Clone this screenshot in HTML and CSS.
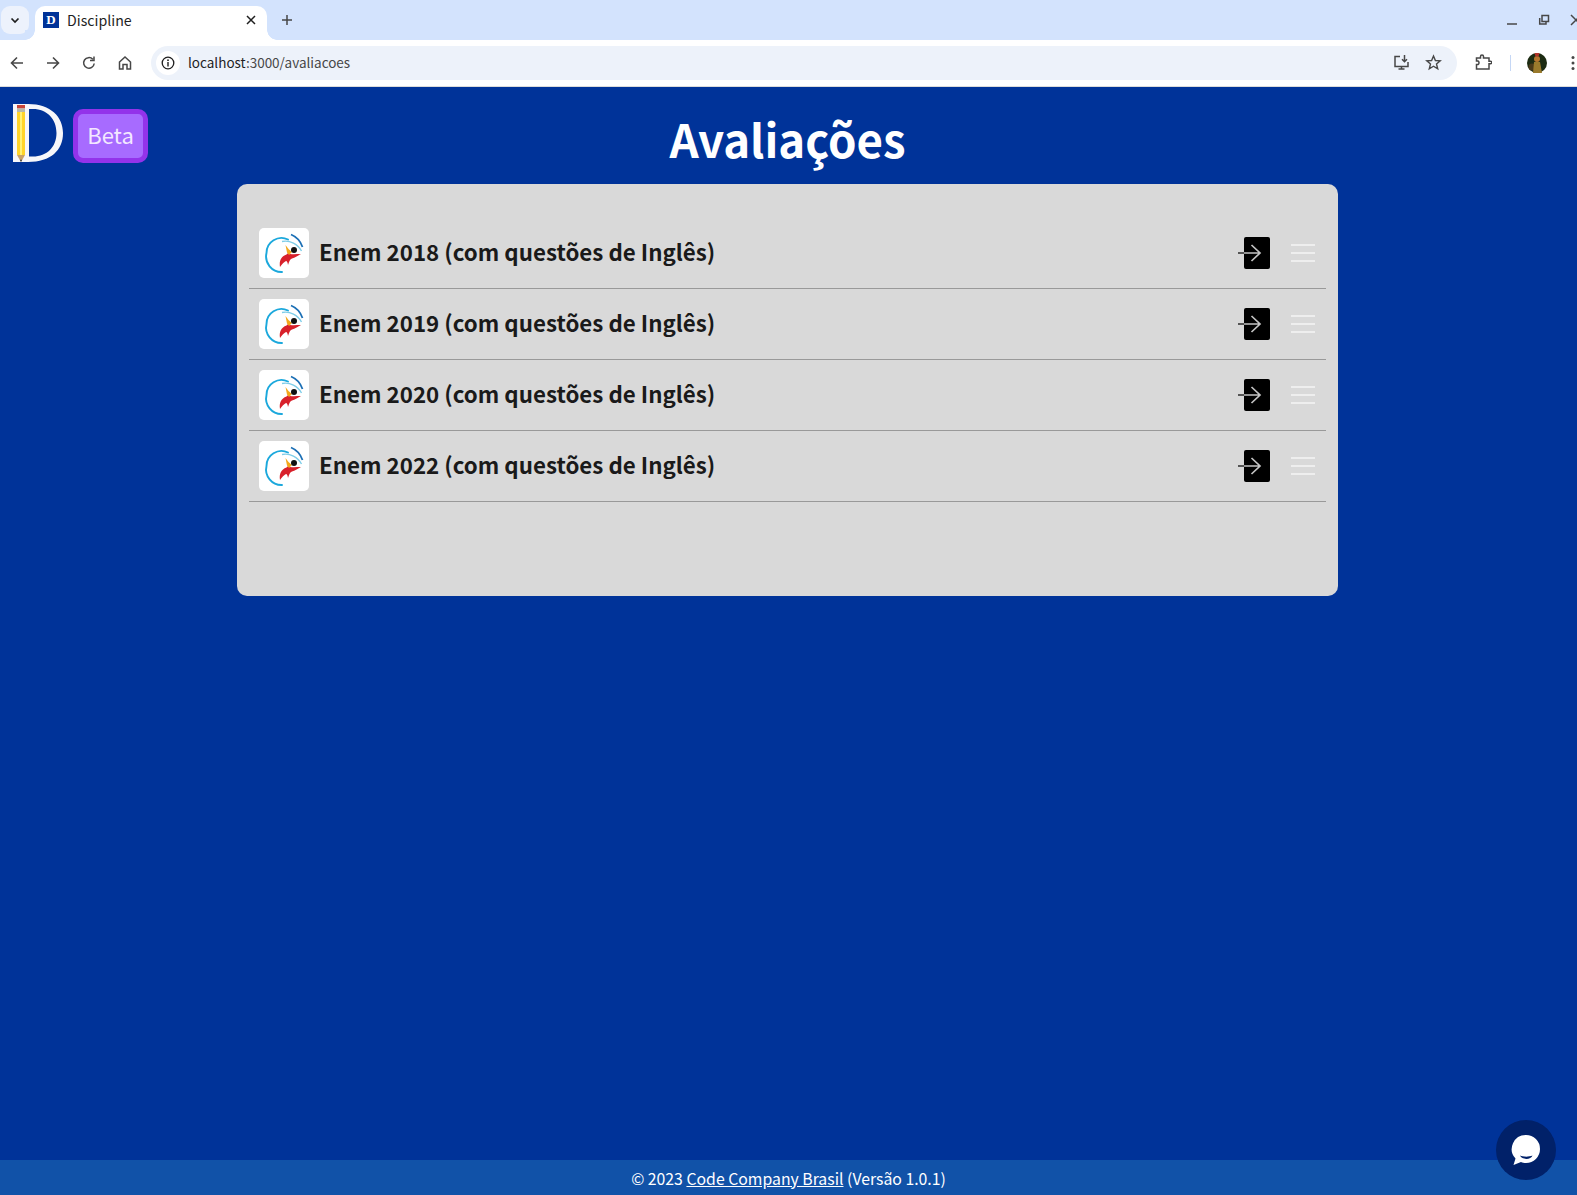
FILE: index.html
```html
<!DOCTYPE html>
<html lang="pt-BR">
<head>
<meta charset="utf-8">
<title>Discipline</title>
<link rel="stylesheet" href="styles.css">
</head>
<body>
<svg class="defs" width="0" height="0" aria-hidden="true">
  <symbol id="enem" viewBox="0 0 50 50">
    <path d="M29 11.500A15 15 0 0 0 7.500 25A15.500 15.500 0 0 0 23 44" fill="none" stroke="#1ba8dc" stroke-width="1.900" stroke-linecap="round"/>
    <path d="M32 6.500C38 9 41.500 13 43.500 19" fill="none" stroke="#1b6fb5" stroke-width="1.800"/>
    <path d="M23 13.500C31 12 39 16 42.500 23" fill="none" stroke="#7fcde8" stroke-width="1.400"/>
    <path d="M21 39C20 33 22 28.500 27.500 26.500L30 24L31 26C35 26.500 38 26 42 26C38 28 36 29.500 33 30.500C31 31 30 34 29 37C28.500 34 28 33 27 33C25 34 23 36 21 39Z" fill="#d8202a"/>
    <path d="M26.500 17L29.500 21L33 24L30 27L28 24.500Z" fill="#f3a81c"/>
    <circle cx="35" cy="22" r="3" fill="#111"/>
  </symbol>
  <symbol id="enter" viewBox="0 0 33 32">
    <rect x="6" y="0" width="26" height="32" rx="2" fill="#000"/>
    <path d="M0 16H6" stroke="#555" stroke-width="2" fill="none"/>
    <path d="M6 16H22M13.500 8L22 16L13.500 24" stroke="#c4c4c4" stroke-width="1.700" fill="none"/>
  </symbol>
</svg>

<div class="browser">
  <div class="tabstrip">
    <div class="tabsearch">
      <svg width="12" height="12" viewBox="0 0 12 12"><path d="M2.500 4.500L6 8L9.500 4.500" fill="none" stroke="#1f1f1f" stroke-width="1.700"/></svg>
    </div>
    <div class="tab">
      <span class="favicon">D</span>
      <span class="tabtitle">Discipline</span>
      <svg class="tabclose" width="12" height="12" viewBox="0 0 12 12"><path d="M2 2L10 10M10 2L2 10" stroke="#1f1f1f" stroke-width="1.500"/></svg>
    </div>
    <svg class="newtab" width="12" height="12" viewBox="0 0 12 12"><path d="M6 1V11M1 6H11" stroke="#474747" stroke-width="1.500"/></svg>
    <div class="winctl">
      <svg width="12" height="12" viewBox="0 0 12 12"><path d="M1 10H11" stroke="#474747" stroke-width="1.500"/></svg>
      <svg width="12" height="12" viewBox="0 0 12 12"><path d="M1.700 4V10H8V7.500M4 1.500H10.500V7.500H4Z" fill="none" stroke="#474747" stroke-width="1.500"/></svg>
      <svg width="12" height="12" viewBox="0 0 12 12"><path d="M1 1L11 11M11 1L1 11" stroke="#474747" stroke-width="1.500"/></svg>
    </div>
  </div>
  <div class="toolbar">
    <div class="navbtns">
      <svg width="16" height="16" viewBox="0 0 16 16"><path d="M14 8H2.500M8 2.500L2.500 8L8 13.500" fill="none" stroke="#474747" stroke-width="1.600"/></svg>
      <svg width="16" height="16" viewBox="0 0 16 16"><path d="M2 8H13.500M8 2.500L13.500 8L8 13.500" fill="none" stroke="#474747" stroke-width="1.600"/></svg>
      <svg width="16" height="16" viewBox="0 0 16 16"><path d="M13.200 8.500A5.300 5.300 0 1 1 11.800 4.300M13 1.500V5.500H9" fill="none" stroke="#474747" stroke-width="1.500"/></svg>
      <svg width="16" height="16" viewBox="0 0 16 16"><path d="M2.500 7L8 2L13.500 7V14H10V9.500H6V14H2.500Z" fill="none" stroke="#474747" stroke-width="1.500"/></svg>
    </div>
    <div class="omnibox">
      <span class="siteinfo">
        <svg width="14" height="14" viewBox="0 0 14 14"><circle cx="7" cy="7" r="5.800" fill="none" stroke="#1f1f1f" stroke-width="1.300"/><path d="M7 6V10.500" stroke="#1f1f1f" stroke-width="1.400"/><circle cx="7" cy="4.200" r=".9" fill="#1f1f1f"/></svg>
      </span>
      <span class="url">localhost<span class="urlpath">:3000/avaliacoes</span></span>
      <span class="omniicons">
        <svg width="17" height="17" viewBox="0 0 17 17"><path d="M7 2.500H2V12.500H15V8M5.500 15H11.500M8.500 12.500V15M11.500 1V7.500M9 5.200L11.500 7.700L14 5.200" fill="none" stroke="#474747" stroke-width="1.500"/></svg>
        <svg width="17" height="17" viewBox="0 0 17 17"><path d="M8.500 2L10.400 6.500L15.200 6.900L11.500 10L12.700 14.800L8.500 12.200L4.300 14.800L5.500 10L1.800 6.900L6.600 6.500Z" fill="none" stroke="#474747" stroke-width="1.400"/></svg>
      </span>
    </div>
    <svg class="ext" width="17" height="17" viewBox="0 0 17 17"><path d="M1.500 4H5.500V2.500A1.500 1.500 0 0 1 8.500 2.500V4H14V7.200H15.500A1.300 1.300 0 0 1 15.500 9.800H14V15H1.500V10.500H3A2 2 0 0 0 3 7H1.500Z" fill="none" stroke="#474747" stroke-width="1.500"/></svg>
    <span class="tooldiv"></span>
    <svg class="avatar" width="20" height="20" viewBox="0 0 20 20">
      <circle cx="10" cy="10" r="10" fill="#1c2b12"/>
      <circle cx="5" cy="14" r="3.500" fill="#4a3a1a"/>
      <path d="M7 9H13L15 20H6Z" fill="#9a7a2c"/>
      <circle cx="10" cy="6" r="3" fill="#b5762f"/>
      <path d="M7.500 0H12.500L11.500 3.500H8.500Z" fill="#b0342a"/>
    </svg>
    <svg class="dots" width="4" height="16" viewBox="0 0 4 16"><circle cx="2" cy="2.500" r="1.500" fill="#474747"/><circle cx="2" cy="8" r="1.500" fill="#474747"/><circle cx="2" cy="13.500" r="1.500" fill="#474747"/></svg>
  </div>
</div>

<div class="page">
  <header class="header">
    <div class="brand">
      <svg class="logo" width="50" height="58" viewBox="0 0 50 58">
        <path fill-rule="evenodd" d="M0 0H15C38 0 50 13 50 29C50 46 38 58 15 58H0ZM16 5V52.500H20C34 52.500 43.500 43 43.500 29C43.500 15 34 5 20 5Z" fill="#f7f7fa"/>
        <rect x="4" y="1" width="8" height="3.500" fill="#c8453a"/>
        <rect x="4" y="4.500" width="8" height="3.500" fill="#b9b9a8"/>
        <rect x="4" y="8" width="8" height="43" fill="#ffd42a"/>
        <rect x="7" y="8" width="2" height="43" fill="#fff176"/>
        <path d="M4 51H12L8 58Z" fill="#c9a268"/>
        <path d="M6.700 55.700H9.300L8 58Z" fill="#444"/>
      </svg>
      <span class="beta">Beta</span>
    </div>
    <h1 class="title">Avaliações</h1>
    <div class="header-end"></div>
  </header>

  <main class="card">
    <ul class="list">
      <li class="row">
        <span class="thumb"><svg width="50" height="50"><use href="#enem"/></svg></span>
        <span class="name">Enem 2018 (com questões de Inglês)</span>
        <svg class="enter" width="33" height="32"><use href="#enter"/></svg>
        <span class="burger"><i></i><i></i><i></i></span>
      </li>
      <li class="row">
        <span class="thumb"><svg width="50" height="50"><use href="#enem"/></svg></span>
        <span class="name">Enem 2019 (com questões de Inglês)</span>
        <svg class="enter" width="33" height="32"><use href="#enter"/></svg>
        <span class="burger"><i></i><i></i><i></i></span>
      </li>
      <li class="row">
        <span class="thumb"><svg width="50" height="50"><use href="#enem"/></svg></span>
        <span class="name">Enem 2020 (com questões de Inglês)</span>
        <svg class="enter" width="33" height="32"><use href="#enter"/></svg>
        <span class="burger"><i></i><i></i><i></i></span>
      </li>
      <li class="row">
        <span class="thumb"><svg width="50" height="50"><use href="#enem"/></svg></span>
        <span class="name">Enem 2022 (com questões de Inglês)</span>
        <svg class="enter" width="33" height="32"><use href="#enter"/></svg>
        <span class="burger"><i></i><i></i><i></i></span>
      </li>
    </ul>
  </main>

  <footer class="footer">© 2023 <a class="footlink" href="#">Code Company Brasil</a> (Versão 1.0.1)</footer>

  <button class="chat" aria-label="Chat">
    <svg width="32" height="34" viewBox="0 0 32 34"><path d="M16 2A14 14 0 0 1 16 30C14 30 12.500 29.700 11 29L3.500 32L5.500 25.500A14 14 0 0 1 16 2Z" fill="#fff"/><path d="M10 22.500C13 24 19 24 22.500 22.500C21 27 12 27 10 22.500Z" fill="#012169"/></svg>
  </button>
</div>
</body>
</html>
```

FILE: styles.css
```css
* { box-sizing: border-box; }
html, body { margin: 0; height: 100%; overflow: hidden; }
body {
  display: flex;
  flex-direction: column;
  height: 1195px;
  font-family: "Noto Sans CJK JP", "Noto Sans", sans-serif;
}
.defs { position: absolute; }

.browser { flex: none; }
.tabstrip {
  height: 40px;
  background: #d3e3fd;
  display: flex;
  align-items: flex-start;
  padding-left: 1px;
  overflow: hidden;
}
.tabsearch {
  width: 28px;
  height: 28px;
  margin-top: 6px;
  border-radius: 9px;
  background: #edf2fc;
  display: flex;
  align-items: center;
  justify-content: center;
}
.tab {
  width: 232px;
  height: 34px;
  margin: 6px 0 0 6px;
  padding: 0 10px 6px 8px;
  background: #fff;
  border-radius: 10px 10px 0 0;
  display: flex;
  align-items: center;
  position: relative;
}
.tab::before,
.tab::after {
  content: "";
  position: absolute;
  bottom: 0;
  width: 10px;
  height: 10px;
}
.tab::before {
  left: -10px;
  background: radial-gradient(circle at 0 0, #d3e3fd 9.500px, #fff 10px);
}
.tab::after {
  right: -10px;
  background: radial-gradient(circle at 100% 0, #d3e3fd 9.500px, #fff 10px);
}
.favicon {
  width: 16px;
  height: 16px;
  background: #003399;
  color: #fff;
  font: bold 13px/16px "Liberation Serif", serif;
  text-align: center;
}
.tabtitle { margin-left: 8px; font-size: 14.200px; line-height: 20px; color: #1f1f1f; flex: 1; }
.tabclose { margin-right: 0; }
.newtab { margin: 14px 0 0 14px; }
.winctl {
  margin-left: auto;
  margin-right: -5px;
  padding-top: 14px;
  display: flex;
  gap: 20px;
}
.toolbar {
  height: 47px;
  background: #fff;
  border-bottom: 1px solid #dcdcdc;
  display: flex;
  align-items: center;
  padding: 0 0 1px 9px;
}
.navbtns { display: flex; gap: 20px; }
.omnibox {
  width: 1306px;
  height: 34px;
  margin-left: 18px;
  border-radius: 17px;
  background: #edf2fa;
  display: flex;
  align-items: center;
  padding: 0 15px 0 5px;
}
.siteinfo {
  width: 24px;
  height: 24px;
  border-radius: 50%;
  background: #fff;
  display: flex;
  align-items: center;
  justify-content: center;
}
.url { margin: 0 0 2px 8px; font-size: 13.500px; line-height: 20px; color: #1f1f1f; flex: 1; }
.urlpath { color: #474747; }
.omniicons { display: flex; gap: 15px; }
.ext { margin-left: 18px; }
.tooldiv { width: 1px; height: 16px; margin-left: 18px; background: #c5d7f5; }
.avatar { margin-left: 16px; flex: none; }
.dots { margin-left: 24px; flex: none; }

.page {
  flex: 1;
  position: relative;
  background: #003399;
  display: flex;
  flex-direction: column;
}
.header {
  height: 97px;
  padding-right: 2px;
  display: grid;
  grid-template-columns: 1fr auto 1fr;
  align-items: start;
}
.brand {
  display: flex;
  align-items: flex-start;
  gap: 10px;
  padding: 17px 0 0 13px;
}
.logo { display: block; }
.beta {
  width: 75px;
  height: 54px;
  margin-top: 5px;
  border: 5px solid #9333ea;
  border-radius: 10px;
  background: #a76bff;
  color: #f3e8ff;
  font-size: 22px;
  line-height: 40px;
  text-align: center;
}
.title {
  margin: 20px 0 0;
  color: #fff;
  font-size: 45.600px;
  font-weight: 700;
  line-height: 62px;
}
.card {
  width: 1101px;
  height: 412px;
  margin-left: 237px;
  padding: 34px 12px 0;
  background: #d9d9d9;
  border-radius: 10px;
}
.list { list-style: none; margin: 0; padding: 0; }
.row {
  height: 71px;
  padding: 10px 11px 10px 10px;
  border-bottom: 1px solid #999;
  display: flex;
  align-items: center;
}
.thumb {
  width: 50px;
  height: 50px;
  background: #fff;
  border-radius: 5px;
  flex: none;
}
.thumb svg { display: block; }
.name {
  flex: 1;
  margin: -4px 0 0 10px;
  color: #1a1a1a;
  font-size: 22.320px;
  font-weight: 700;
}
.enter { flex: none; }
.burger {
  width: 24px;
  margin-left: 20px;
  display: flex;
  flex-direction: column;
  gap: 6px;
  flex: none;
}
.burger i { display: block; height: 2px; background: #eeeeee; }

.footer {
  margin-top: auto;
  height: 35px;
  background: #1152a8;
  color: #fff;
  font-size: 15.800px;
  line-height: 37px;
  text-align: center;
}
.footlink { color: #fff; text-decoration: underline; }
.chat {
  position: absolute;
  right: 21px;
  bottom: 15px;
  width: 60px;
  height: 60px;
  padding: 0;
  border: 0;
  border-radius: 50%;
  background: #012169;
  display: flex;
  align-items: center;
  justify-content: center;
}
```
